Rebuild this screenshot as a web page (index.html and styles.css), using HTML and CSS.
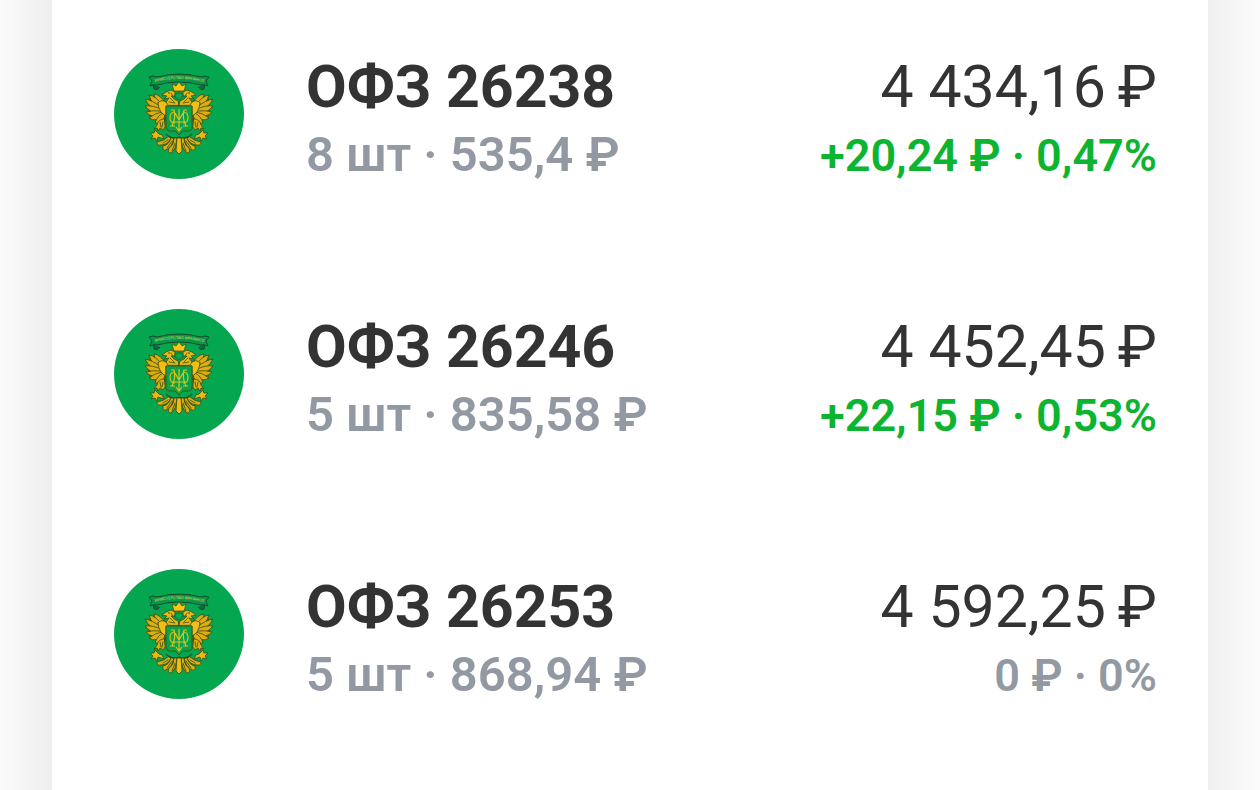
FILE: index.html
```
<!DOCTYPE html>
<html lang="ru">
<head>
    <meta charset="UTF-8">
    <meta name="viewport" content="width=device-width, initial-scale=1.0">
    <title>Облигации</title>
    <link rel="stylesheet" href="styles.css">
</head>
<body>
    <svg class="defs" aria-hidden="true">
        <defs>
        <!-- left half of the eagle, mirrored for the right one -->
        <g id="half" stroke="#3c4a12" stroke-width="0.8" stroke-linejoin="round" stroke-linecap="round" fill="#dcae12">
            <!-- dark shape under the feathers -->
            <path d="M36 48 L52 52 L53 72 L46 71 L36 70 L34 62 L34 54 Z" fill="#5b5a12" stroke="none"/>
            <!-- wing feathers -->
            <path d="M47 57 Q41 54 40 45 Q47 46 51 54 Z"/>
            <path d="M46 60 Q38 56 35 46 Q42 47 48 56 Z"/>
            <path d="M46 62 Q36 60 31 50 Q38 51 47 58 Z"/>
            <path d="M46 64 Q37 65 31 57 Q38 56 47 60 Z"/>
            <path d="M47 65 Q38 70 32 63 Q39 61 47 62 Z"/>
            <path d="M49 66 Q42 74 35 69 Q41 64 48 63 Z"/>
            <path d="M51 66 Q49 76 41 74 Q43 67 49 64 Z"/>
            <!-- shoulder over the shield -->
            <path d="M44 54 Q47 50 52 53 L65 54 V57 H52 V67 Q45 64 44 54 Z" fill="#efbf18"/>
            <!-- head and neck -->
            <path d="M65 56 L64 52 L60 50 L57 47 L61 47 L61 43 L57 41 L52 43 L48 46 L53 47 L50 50 L55 49 L52 53 L54 56 Z" fill="#e8b916"/>
            <path d="M55 53 L61 54 M56 49 L60 53 M57 44 L59 47" fill="none"/>
            <circle cx="55" cy="44" r="0.8" fill="#2c4a16" stroke="none"/>
            <!-- leg and claw -->
            <path d="M50 70 Q44 70 43 76 L40 80 L43 79 L44 82 L46 79 L49 81 L51 78 Z"/>
            <path d="M46 73 L47 78 M49 73 L48 78" fill="none"/>
            <path d="M45 85 L41 81 L40 84 L36 84 L39 87 L37 90 L41 89 L43 92 L44 88 L50 90 L48 86 Z" fill="#e8b916"/>
            <!-- tail -->
            <path d="M57 89 Q54 96 47 96 Q43 97 43 93 Q50 92 54 88 Z"/>
            <path d="M60 89 Q58 98 52 101 Q48 102 49 97 Q55 96 57 89 Z"/>
            <path d="M63 89 Q62 101 57 104 Q53 104 55 99 Q60 96 60 89 Z"/>
            <path d="M49 94 L54 91 M53 99 L58 92 M58 102 L61 94" fill="none"/>
        </g>
        <symbol id="emblem" viewBox="0 0 130 130">
            <circle cx="65" cy="65" r="65" fill="#05a650"/>
            <use href="#half"/>
            <use href="#half" transform="translate(130) scale(-1 1)"/>
            <path d="M63 89 H67 L68 102 L65 105 L62 102 Z" fill="#efbf18" stroke="#3c4a12" stroke-width="0.8"/>
            <path d="M52 85 Q58 91 65 88 Q72 91 78 85" fill="none" stroke="#24552a" stroke-width="1.2"/>
            <!-- ribbon -->
            <path d="M39 35 L40 40 Q44 42 46 38 M91 35 L90 40 Q86 42 84 38" fill="#0b6b39" stroke="#164b2d" stroke-width="1"/>
            <path d="M35 28 Q39 26 43 28 Q65 22 87 28 Q91 26 95 28 L92 32 L94 37 Q90 35 87 36 Q65 30 43 36 Q40 35 36 37 L38 32 Z" fill="#07974a" stroke="#164b2d" stroke-width="1"/>
            <path id="arc" d="M41 33 Q65 27 89 33" fill="none"/>
            <text class="motto"><textPath href="#arc" startOffset="50%" text-anchor="middle">МИНИСТЕРСТВО ФИНАНСОВ</textPath></text>
            <!-- crown -->
            <path d="M60 42 L58 35 L62 37 L65 33 L68 37 L72 35 L70 42 Z" fill="#ffc414" stroke="#3c4a12" stroke-width="0.7"/>
            <path d="M61 45 Q65 42 69 45 L69 48 L65 51 L61 48 Z" fill="#05a650" stroke="#3c4a12" stroke-width="0.7"/>
            <!-- shield -->
            <path d="M52 57 H78 V80 L75 82 H69 L65 86 L61 82 H55 L52 80 Z" fill="#08a34c" stroke="#3c5a14" stroke-width="1"/>
            <g fill="none" stroke="#d6c41e" stroke-width="1.2">
                <path d="M61 63 Q56 63 56 68.500 Q56 74 61 74 M69 63 Q74 63 74 68.500 Q74 74 69 74"/>
                <path d="M57 61 H60 Q62 69 58 77 M73 61 H70 Q68 69 72 77 M56 77 H61 M69 77 H74 M61 64 L65 71 L69 64 M59 73 H71 M65 60 V81 M62 78 L65 82 L68 78"/>
            </g>
        </symbol>
        </defs>
    </svg>
    <main class="card">
        <ul class="list">
            <li class="item">
                <svg class="logo" aria-hidden="true"><use href="#emblem"/></svg>
                <div class="info">
                    <p class="name">ОФЗ 26238</p>
                    <p class="count">8 шт · 535,4 ₽</p>
                </div>
                <div class="sum">
                    <p class="total">4 434,16&thinsp;₽</p>
                    <p class="profit up">+20,24 ₽ · 0,47%</p>
                </div>
            </li>
            <li class="item">
                <svg class="logo" aria-hidden="true"><use href="#emblem"/></svg>
                <div class="info">
                    <p class="name">ОФЗ 26246</p>
                    <p class="count">5 шт · 835,58 ₽</p>
                </div>
                <div class="sum">
                    <p class="total">4 452,45&thinsp;₽</p>
                    <p class="profit up">+22,15 ₽ · 0,53%</p>
                </div>
            </li>
            <li class="item">
                <svg class="logo" aria-hidden="true"><use href="#emblem"/></svg>
                <div class="info">
                    <p class="name">ОФЗ 26253</p>
                    <p class="count">5 шт · 868,94 ₽</p>
                </div>
                <div class="sum">
                    <p class="total">4 592,25&thinsp;₽</p>
                    <p class="profit">0 ₽ · 0%</p>
                </div>
            </li>
        </ul>
    </main>
</body>
</html>
```
FILE: styles.css
```
body, p, ul, li {margin: 0; padding: 0;}
body {
    font-family: Roboto, "Noto Sans", sans-serif;
    color: #333;
    background: linear-gradient(to right, #fbfbfb, #eee 52px, #f0f0f0 calc(100% - 52px), #fbfbfb);
}
.defs {
    display: block;
    width: 0;
    height: 0;
}
.card {
    box-sizing: border-box;
    min-height: 100vh;
    margin: 0 52px;
    padding: 49px 51px 0 62px;
    background: #fff;
}
.list {
    display: grid;
    gap: 130px;
    padding-bottom: 91px;
    list-style: none;
}
.item {
    display: flex;
    height: 130px;
    white-space: nowrap;
}
.logo {
    flex: none;
    width: 130px;
    height: 130px;
    margin-right: 62px;
}
.motto {
    font-size: 4px;
    font-weight: 500;
    fill: #b9c95a;
}
.info {
    flex: 1;
}
.sum {
    text-align: right;
}
.name, .total {
    padding-top: 2px;
    font-size: 59px;
    line-height: 72px;
}
.name {
    font-weight: 700;
}
.count {
    font-size: 49px;
    line-height: 64px;
    font-weight: 600;
    color: #9299a2;
}
.profit {
    font-size: 45px;
    line-height: 66px;
    font-weight: 600;
    color: #9299a2;
}
.up {
    color: #0db42f;
}
```
